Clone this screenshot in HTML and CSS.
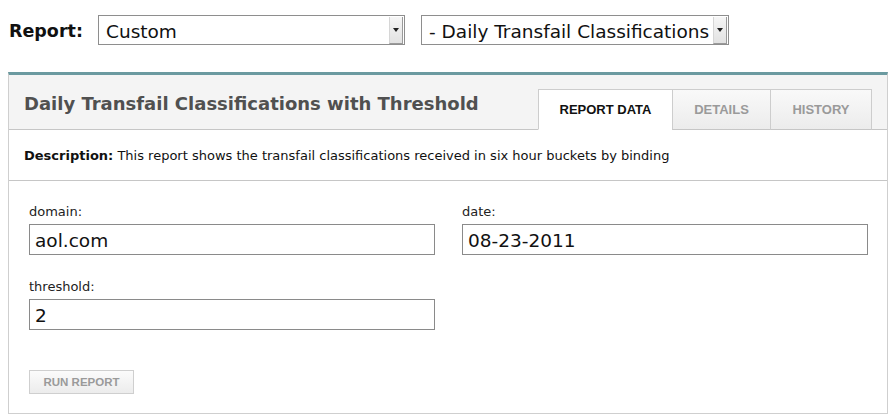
FILE: index.html
```html
<!DOCTYPE html>
<html>
<head>
<meta charset="utf-8">
<link rel="stylesheet" href="styles.css">
</head>
<body>
<div class="page">
  <div class="topbar">
    <span class="report-label">Report:</span>
    <div class="select select-a">
      <span class="select-text">Custom</span>
      <span class="select-arrow"><svg width="6" height="4" viewBox="0 0 6 4"><path d="M0 0H6L3 4Z" fill="#222"/></svg></span>
    </div>
    <div class="select select-b">
      <span class="select-text">- Daily Transfail Classifications</span>
      <span class="select-arrow"><svg width="6" height="4" viewBox="0 0 6 4"><path d="M0 0H6L3 4Z" fill="#222"/></svg></span>
    </div>
  </div>

  <div class="panel">
    <div class="panel-head">
      <h1 class="panel-title">Daily Transfail Classifications with Threshold</h1>
      <div class="tabs">
        <div class="tab tab-active">REPORT DATA</div>
        <div class="tab tab-details">DETAILS</div>
        <div class="tab tab-history">HISTORY</div>
      </div>
    </div>
    <div class="desc"><span><b>Description:</b> This report shows the transfail classifications received in six hour buckets by binding</span></div>
    <div class="form">
      <div class="fields">
        <div class="field">
          <div class="label">domain:</div>
          <div class="input">aol.com</div>
        </div>
        <div class="field">
          <div class="label">date:</div>
          <div class="input">08-23-2011</div>
        </div>
        <div class="field">
          <div class="label">threshold:</div>
          <div class="input">2</div>
        </div>
      </div>
      <div class="button">RUN REPORT</div>
    </div>
  </div>
</div>
</body>
</html>
```

FILE: styles.css
```css
* { box-sizing: border-box; }
html, body { margin: 0; padding: 0; background: #fff; }
body { font-family: "DejaVu Sans", Verdana, sans-serif; color: #111; }
.page { padding: 15px 0 0 8px; }

.topbar { display: flex; align-items: center; height: 30px; }
.report-label { font-weight: bold; font-size: 17.5px; margin-left: 1px; width: 89px; color: #111; padding-top: 2px; }
.select {
  display: flex; align-items: center; height: 30px;
  border: 1px solid #8e8e8e; background: #fff;
  padding-left: 7px; position: relative;
}
.select-a { width: 307px; }
.select-b { width: 308px; margin-left: 16px; }
.select-text { flex: 1; font-size: 18.5px; white-space: nowrap; color: #111; padding-top: 2px; }
.select-arrow {
  width: 14px; height: 27px; margin-right: 1px;
  display: flex; align-items: center; justify-content: center;
  background: linear-gradient(#f6f6f6, #e2e2e2);
  border-left: 1px solid #d6d6d6; border-right: 1px solid #9a9a9a; border-bottom: 1px solid #9a9a9a;
}

.panel {
  margin-top: 27px; width: 880px;
  border: 1px solid #cfcfcf; border-top: 3px solid #6b9aa0;
  background: #fff;
}
.panel-head {
  display: flex; justify-content: space-between; align-items: flex-end;
  height: 55px; background: #f4f4f4; border-bottom: 1px solid #c6c6c6;
  padding: 0 15px;
}
.panel-title {
  align-self: center; margin: 0; padding-top: 2px;
  font-size: 18px; font-weight: bold; color: #505050; white-space: nowrap;
}
.tabs { display: flex; margin-bottom: -1px; }
.tab {
  height: 41px; display: flex; align-items: center; justify-content: center;
  font-family: "Liberation Sans", Arial, sans-serif; font-weight: bold; font-size: 13px;
  color: #9a9a9a; background: linear-gradient(#f9f9f9, #ececec);
  border: 1px solid #cdcdcd; border-bottom-color: #c6c6c6; margin-left: -1px;
}
.tab-active { width: 135px; background: #fff; color: #111; border-bottom-color: #fff; }
.tab-details { width: 99px; }
.tab-history { width: 102px; }

.desc {
  height: 51px; display: flex; align-items: center; padding-left: 15px;
  font-size: 13px; color: #111; border-bottom: 1px solid #c6c6c6; white-space: nowrap;
}

.form { padding: 23px 19px 19px 20px; }
.fields { display: grid; grid-template-columns: 406px 406px; column-gap: 27px; row-gap: 24px; }
.label { font-size: 13px; line-height: 15px; color: #222; margin-bottom: 5px; }
.input {
  height: 31px; border: 1px solid #8a8a8a; padding-left: 5px; padding-top: 1px;
  display: flex; align-items: center; font-size: 18.5px; color: #111;
}
.button {
  margin-top: 40px; width: 105px; height: 24px;
  display: flex; align-items: center; justify-content: center;
  border: 1px solid #cfcfcf; background: linear-gradient(#fbfbfb, #ececec);
  font-family: "Liberation Sans", Arial, sans-serif; font-weight: bold; font-size: 11.5px; color: #9a9a9a;
}
```
